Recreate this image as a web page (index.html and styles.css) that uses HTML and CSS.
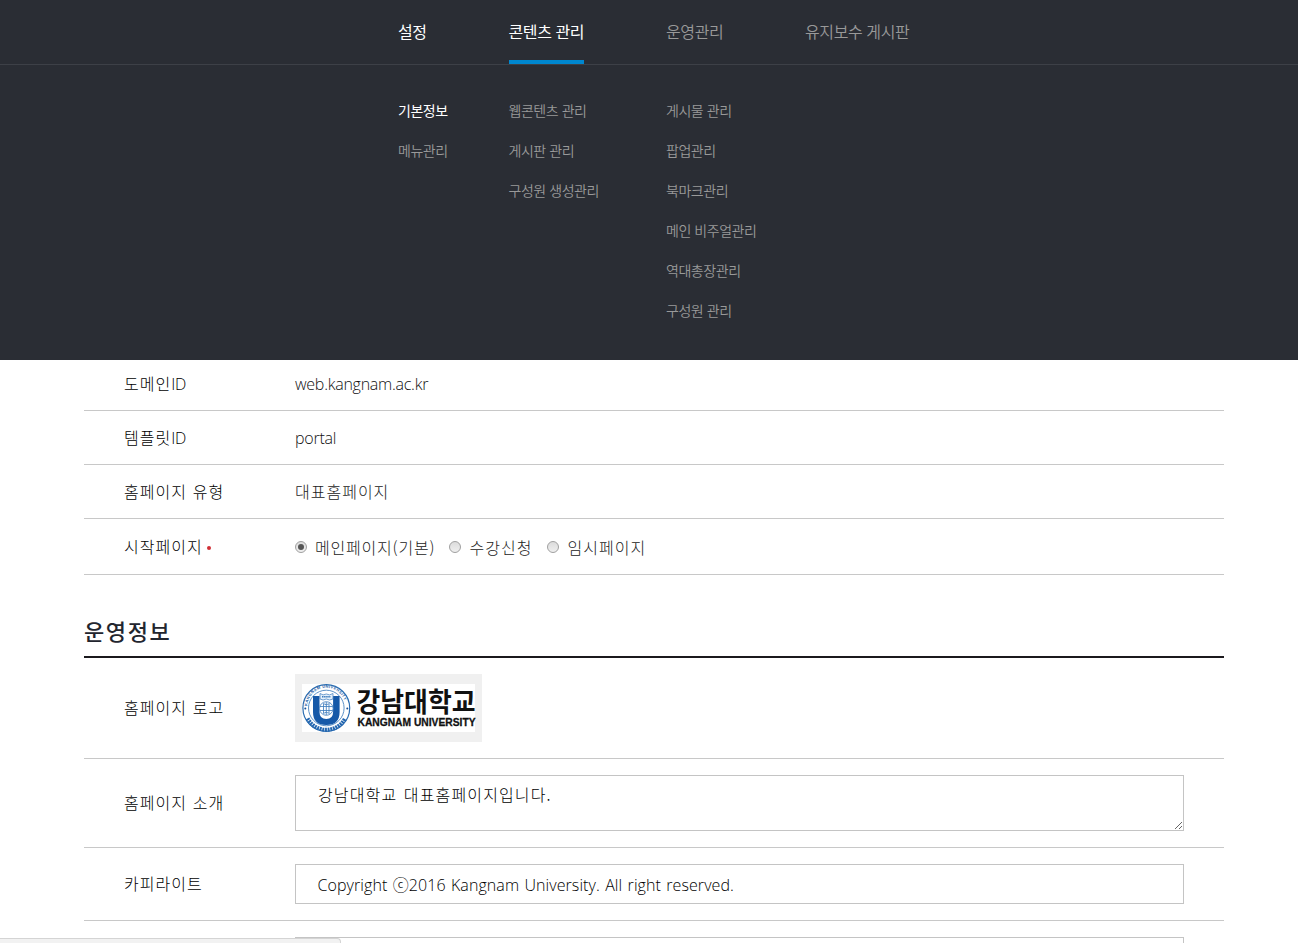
FILE: index.html
```html
<!DOCTYPE html>
<html lang="ko">
<head>
<meta charset="utf-8">
<title>운영정보</title>
<link rel="stylesheet" href="styles.css">
</head>
<body>
<header class="gnb">
  <nav class="gnb-top">
    <a class="c1 on">설정</a>
    <a class="c2 on"><span class="current">콘텐츠 관리</span></a>
    <a class="c3">운영관리</a>
    <a class="c4">유지보수 게시판</a>
  </nav>
  <div class="gnb-sub">
    <ul class="c1"><li class="on">기본정보</li><li>메뉴관리</li></ul>
    <ul class="c2"><li>웹콘텐츠 관리</li><li>게시판 관리</li><li>구성원 생성관리</li></ul>
    <ul class="c3"><li>게시물 관리</li><li>팝업관리</li><li>북마크관리</li><li>메인 비주얼관리</li><li>역대총장관리</li><li>구성원 관리</li></ul>
  </div>
</header>
<main class="content">
  <div class="row"><div class="th">도메인<span class="en">ID</span></div><div class="td"><span class="en">web.kangnam.ac.kr</span></div></div>
  <div class="row"><div class="th">템플릿<span class="en">ID</span></div><div class="td"><span class="en">portal</span></div></div>
  <div class="row"><div class="th">홈페이지 유형</div><div class="td">대표홈페이지</div></div>
  <div class="row start"><div class="th">시작페이지<i class="dot"></i></div>
    <div class="td radios">
      <label class="r1"><i class="radio checked"></i>메인페이지(기본)</label>
      <label class="r2"><i class="radio"></i>수강신청</label>
      <label class="r3"><i class="radio"></i>임시페이지</label>
    </div>
  </div>
  <h2 class="title">운영정보</h2>
  <div class="row logo-row"><div class="th">홈페이지 로고</div>
    <div class="td">
      <svg class="logo" width="187" height="68" viewBox="0 0 187 68">
        <rect width="187" height="68" fill="#f0f0f0"/>
        <rect x="7" y="10" width="173" height="48" fill="#fff"/>
        <circle cx="31.3" cy="34" r="23.4" fill="#fff" stroke="#2a6cb0" stroke-width="1.2"/>
        <path d="M12.5 44.500A21.300 21.300 0 0 0 50.100 44.500" fill="none" stroke="#2467b0" stroke-width="4" stroke-dasharray="2 .7"/>
        <circle cx="31.300" cy="34" r="17.800" fill="#fff" stroke="#4b86c2" stroke-width=".9"/>
        <path id="ring" d="M12.700 36A18.900 18.900 0 1 1 49.900 36" fill="none"/>
        <text class="ring-text"><textPath href="#ring" startOffset="4" textLength="52">KANGNAM UNIVERSITY</textPath></text>
        <circle cx="10.300" cy="34.500" r="1" fill="#174f96"/><circle cx="52.300" cy="34.500" r="1" fill="#174f96"/>
        <path d="M18 22H24.500V38Q24.500 45 31.300 45T38.100 38V22H44.600V38Q44.600 51 31.300 51T18 38Z" fill="#1659a8"/>
        <path d="M25 19.500Q28 22 31.300 20Q34.500 22 38 19.500V25Q34.500 27 31.300 25Q28 27 25 25Z" fill="#e5f0fa" stroke="#3979bb" stroke-width=".7"/>
        <path d="M27 22.700H35.800" stroke="#3979bb" stroke-width="1.600" stroke-dasharray="1.500 .6"/>
        <circle cx="31.300" cy="34.500" r="6.800" fill="#fff" stroke="#3979bb" stroke-width=".8"/>
        <path d="M31.300 28V41M25 32.500H37.600M25 36.500H37.600M28 29.500Q31.300 32 34.600 29.500M28 39.500Q31.300 37 34.600 39.500M28.500 30V39M34 30V39" fill="none" stroke="#3979bb" stroke-width=".8"/>
        <text class="logo-ko" x="61.500" y="37.500" textLength="119" lengthAdjust="spacingAndGlyphs">강남대학교</text>
        <text class="logo-en" x="62.500" y="51.500" textLength="118" lengthAdjust="spacingAndGlyphs">KANGNAM UNIVERSITY</text>
      </svg>
    </div>
  </div>
  <div class="row intro-row"><div class="th">홈페이지 소개</div><div class="td"><textarea class="field area">강남대학교 대표홈페이지입니다.</textarea></div></div>
  <div class="row copy-row"><div class="th">카피라이트</div><div class="td"><div class="field line">Copyright ⓒ2016 Kangnam University. All right reserved.</div></div></div>
  <div class="row next-row"><div class="th"></div><div class="td"><div class="field clipped"></div></div></div>
</main>
<div class="status"></div>
</body>
</html>
```
FILE: styles.css
```css
* { box-sizing: border-box; }
html, body { margin: 0; height: 943px; overflow: hidden; background: #fff; }
body { font-family: "Noto Sans CJK KR", sans-serif; font-size: 16px; color: #222; }
ul { margin: 0; padding: 0; list-style: none; }
.gnb { position: relative; z-index: 2; height: 360px; background: #2a2d34; color: #999; }
.gnb-top { display: flex; height: 65px; padding-left: 398px; border-bottom: 1px solid #3d4047; line-height: 62px; letter-spacing: -.4px; font-weight: 350; white-space: nowrap; }
.c1 { width: 110.500px; }
.c2 { width: 157.500px; }
.c3 { width: 139px; }
.on { color: #fff; font-weight: 400; }
.current { display: inline-block; width: 75px; height: 64px; border-bottom: 4px solid #0087cf; }
.gnb-sub { display: flex; padding: 25px 0 0 398px; font-size: 14px; line-height: 40px; letter-spacing: -.45px; font-weight: 350; white-space: nowrap; }

.content { width: 1140px; height: 586px; margin: -3px 0 0 84px; overflow: hidden; letter-spacing: 1px; word-spacing: .4px; font-weight: 300; }
.row { display: flex; align-items: center; height: 54px; border-bottom: 1px solid #c8c8c8; line-height: 24px; }
.th { display: flex; align-items: center; width: 211px; padding: 0 0 2px 40px; color: #000; white-space: pre; }
.td { flex: 1; color: #222; }
.row:nth-child(3) .td { padding-bottom: 2px; }
.en { font-family: "Open Sans", sans-serif; letter-spacing: -.25px; color: #111; }
.th .en { padding-top: 2px; color: #000; }
.start { height: 56px; }
.dot { width: 4px; height: 4px; margin: 4px 0 0 4px; border-radius: 50%; background: #d02f35; }
.radios { display: flex; padding-top: 1px; }
.radios label { display: flex; align-items: center; white-space: nowrap; }
.r1 { width: 154px; letter-spacing: .8px; }
.r2 { width: 98px; }
.radio { display: flex; align-items: center; justify-content: center; width: 12px; height: 12px; margin: -1px 8.500px 0 0; border: 1px solid #a0a0a0; border-radius: 50%; background: linear-gradient(#dcdcdc, #efefef); }
.r1 .radio { margin-right: 8px; }
.checked::after { content: ""; width: 6px; height: 6px; border-radius: 50%; background: #555; }
.title { height: 83px; margin: 0; padding-top: 39px; border-bottom: 2px solid #1b191d; font-size: 22px; line-height: 32px; font-weight: 500; letter-spacing: 1.600px; color: #22252e; }
.logo-row { height: 101px; }
.logo { display: block; }
.ring-text { font: bold 4px "Liberation Sans", sans-serif; letter-spacing: 0; word-spacing: 0; fill: #1f5fa8; }
.logo-ko { font: 700 27px "Noto Sans CJK KR", sans-serif; letter-spacing: 0; fill: #111; }
.logo-en { font: bold 11px "Liberation Sans", sans-serif; letter-spacing: 0; word-spacing: 0; fill: #111; stroke: #111; stroke-width: .3px; }
.intro-row { height: 89px; }
.field { display: block; width: 889px; border: 1px solid #c4c4c4; background: #fff; color: #000; }
.area { height: 56px; margin: 0; padding: 6px 22px; font: inherit; line-height: 24px; letter-spacing: 1.150px; word-spacing: .8px; outline: none; resize: both; overflow: hidden; }
.copy-row { height: 73px; }
.line { height: 40px; padding: 8px 21.500px; font-family: "Open Sans", "Noto Sans CJK KR", sans-serif; letter-spacing: .08px; word-spacing: 1.100px; }
.next-row { height: 22px; align-items: flex-start; padding-top: 16px; border-bottom: 0; }
.clipped { height: 6px; border-bottom: 0; }
.status { position: fixed; left: 0; bottom: 0; width: 341px; height: 5px; background: #f2f2f2; border-top: 1px solid #d4d4d4; border-right: 1px solid #d4d4d4; border-top-right-radius: 4px; }
```
